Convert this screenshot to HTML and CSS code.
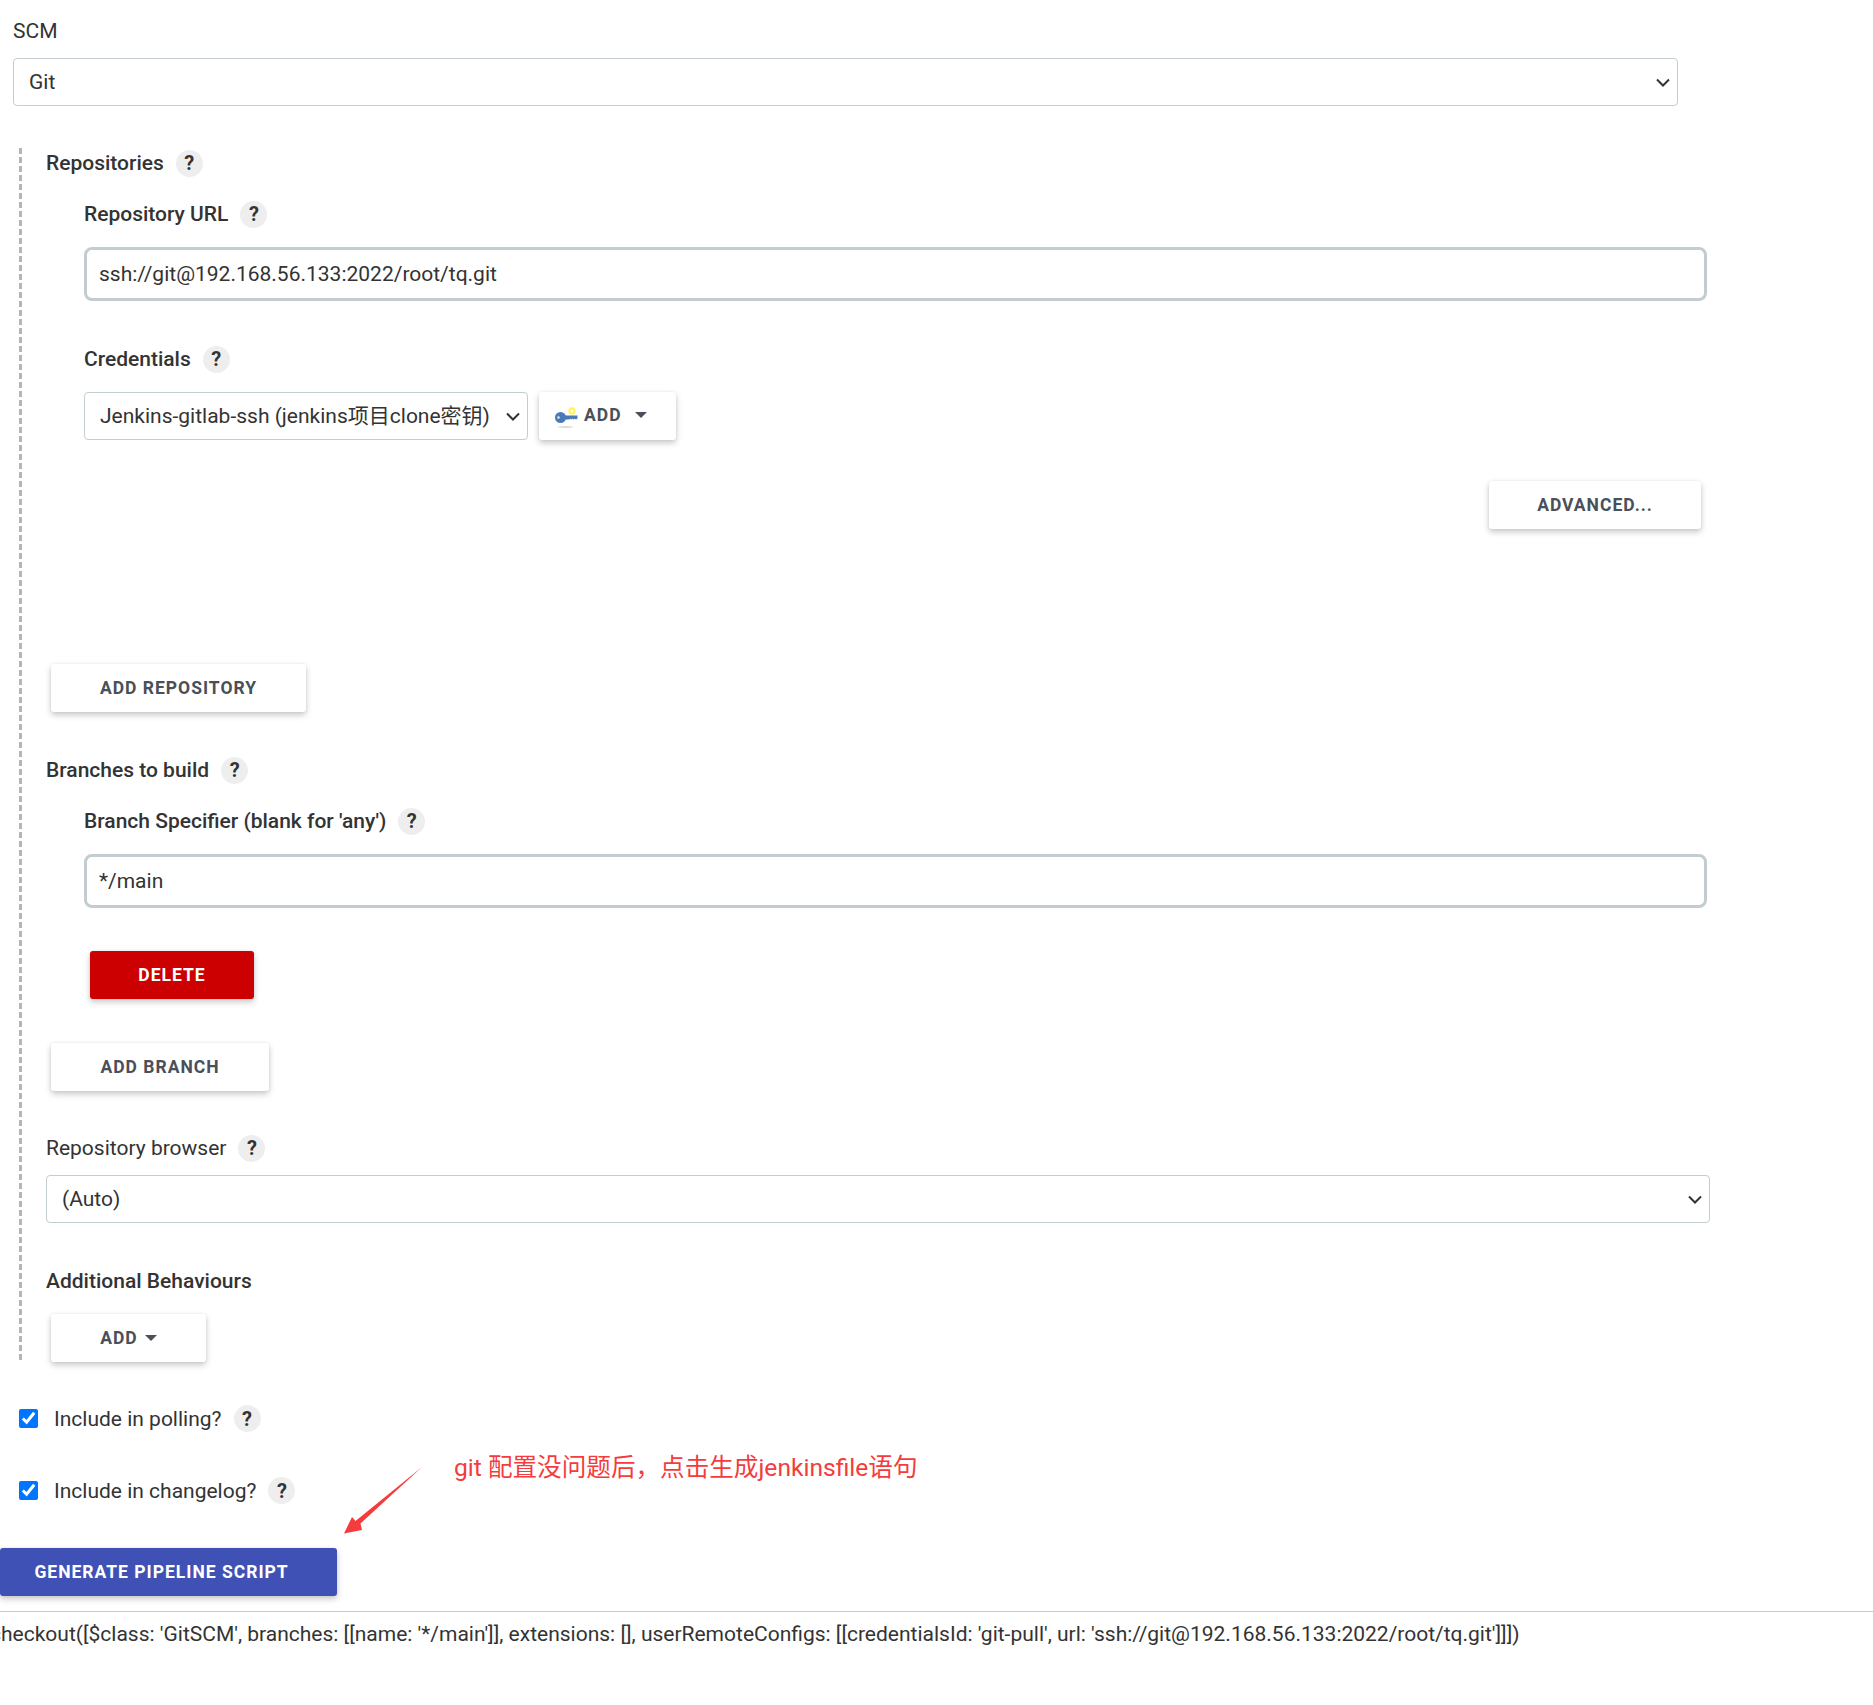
FILE: index.html
```html
<!DOCTYPE html>
<html lang="en">
<head>
<meta charset="utf-8">
<title>Pipeline Syntax</title>
<link rel="stylesheet" href="styles.css">
</head>
<body>
<main class="page">
  <section class="scm">
    <label class="label plain">SCM</label>
    <select class="select scm-select"><option>Git</option></select>
  </section>

  <section class="git-config">
    <div class="title first"><span>Repositories</span><i class="help">?</i></div>
    <div class="nested">
      <div class="title"><span>Repository URL</span><i class="help">?</i></div>
      <input class="input" type="text" value="ssh://git@192.168.56.133:2022/root/tq.git">
      <div class="title cred-title"><span>Credentials</span><i class="help">?</i></div>
      <div class="cred-row">
        <select class="select cred-select"><option>Jenkins-gitlab-ssh (jenkins项目clone密钥)</option></select>
        <button class="btn add-cred" type="button">
          <svg class="key" width="24" height="24" viewBox="0 0 24 24" aria-hidden="true">
            <ellipse cx="11.5" cy="23" rx="7.5" ry="1" fill="#ddd"/>
            <circle cx="18" cy="7" r="3.7" fill="#fff45c"/>
            <circle cx="18" cy="7" r="1.6" fill="#fffde0"/>
            <circle cx="6.5" cy="13.5" r="5.5" fill="#4a7ab8"/>
            <path d="M10 11.5h13.5v3l-1.5 1-1.2-.8-1.2.8-1.2-.8-1.2.8-1.2-.8-1 .8H10z" fill="#4a7ab8"/>
            <circle cx="4.5" cy="13.5" r="1.3" fill="#dfe8f3"/>
          </svg>
          <span>ADD</span><b class="caret wide"></b>
        </button>
      </div>
      <div class="advanced-row"><button class="btn advanced" type="button">ADVANCED...</button></div>
    </div>
    <button class="btn add-repo" type="button">ADD REPOSITORY</button>

    <div class="title branches"><span>Branches to build</span><i class="help">?</i></div>
    <div class="nested">
      <div class="title"><span>Branch Specifier (blank for 'any')</span><i class="help">?</i></div>
      <input class="input" type="text" value="*/main">
      <button class="btn danger" type="button">DELETE</button>
    </div>
    <button class="btn add-branch" type="button">ADD BRANCH</button>

    <div class="label browser-label"><span>Repository browser</span><i class="help">?</i></div>
    <select class="select browser-select"><option>(Auto)</option></select>

    <div class="title behaviours"><span>Additional Behaviours</span></div>
    <button class="btn add-behaviour" type="button"><span>ADD</span><b class="caret"></b></button>
  </section>

  <label class="check polling"><input type="checkbox" checked><span>Include in polling?</span><i class="help">?</i></label>
  <label class="check changelog"><input type="checkbox" checked><span>Include in changelog?</span><i class="help">?</i></label>

  <button class="btn primary" type="button">GENERATE PIPELINE SCRIPT</button>
  <hr class="rule">
  <div class="output"><p>checkout([$class: 'GitSCM', branches: [[name: '*/main']], extensions: [], userRemoteConfigs: [[credentialsId: 'git-pull', url: 'ssh://git@192.168.56.133:2022/root/tq.git']]])</p></div>

  <svg class="arrow" width="90" height="80" viewBox="0 0 90 80" aria-hidden="true">
    <path d="M87 7 25.500 63.500 27 70 9 73.500 17 57 20.500 61z" fill="#f43c3c"/>
  </svg>
  <p class="note">git 配置没问题后，点击生成jenkinsfile语句</p>
</main>
</body>
</html>
```

FILE: styles.css
```css
* { box-sizing: border-box; }
html, body { margin: 0; background: #fff; }
body {
  font-family: Roboto, "Noto Sans CJK SC", sans-serif;
  font-size: 21px;
  color: #333;
}
.page { position: relative; width: 1873px; height: 1705px; overflow: hidden; padding-top: 19px; }

.label, .title {
  display: flex;
  align-items: center;
  height: 24px;
  line-height: 24px;
  font-size: 21px;
  color: #333;
}
.title { font-weight: 500; }
.plain { margin-left: 13px; }

.help {
  display: inline-flex;
  align-items: center;
  justify-content: center;
  width: 27px;
  height: 27px;
  margin-left: 12px;
  border-radius: 50%;
  background: #eee;
  font-style: normal;
  font-weight: 700;
  font-size: 20px;
  color: #333;
  flex: none;
}

.select {
  display: block;
  height: 48px;
  padding: 0 28px 0 15px;
  border: 1px solid #c3ccd1;
  border-radius: 4px;
  background: #fff url("data:image/svg+xml,%3Csvg xmlns='http://www.w3.org/2000/svg' width='14' height='9' viewBox='0 0 14 9'%3E%3Cpath d='M1 1.500l6 6 6-6' fill='none' stroke='%23333' stroke-width='2'/%3E%3C/svg%3E") no-repeat right 7px center;
  appearance: none;
  font: 400 21px Roboto, "Noto Sans CJK SC", sans-serif;
  color: #333;
}
.scm-select { width: 1665px; margin: 15px 0 0 13px; }

.git-config {
  margin: 42px 0 0 19px;
  padding: 0 0 0 27px;
  background: repeating-linear-gradient(#b0b6ba 0 6px, transparent 6px 9px) no-repeat 0 0 / 3px 100%;
  height: 1214px;
}
.first { padding-top: 3px; height: 27px; }
.nested { margin-left: 38px; }
.nested > .title { margin-top: 27px; }
.nested > .cred-title { margin-top: 46px; }

.input {
  display: block;
  width: 1623px;
  height: 54px;
  margin-top: 21px;
  padding: 0 12px;
  border: 3px solid #c3ccd1;
  border-radius: 8px;
  font: 400 21px Roboto, sans-serif;
  color: #333;
  background: #fff;
  outline: none;
}

.cred-row { display: flex; gap: 11px; margin-top: 21px; }
.cred-select { width: 444px; }

.btn {
  display: inline-flex;
  align-items: center;
  justify-content: center;
  height: 48px;
  padding: 0;
  border: 0;
  border-radius: 3px;
  background: #fff;
  box-shadow: 0 3px 6px rgba(0, 0, 0, .22), 0 0 3px rgba(0, 0, 0, .06);
  font: 700 17.500px Roboto, sans-serif;
  letter-spacing: 1px;
  color: #4a4f59;
}
.add-cred { width: 137px; justify-content: flex-start; padding: 0 0 3px 15px; }
.key { width: 24px; height: 24px; margin: 3px 6px 0 0; flex: none; }
.caret {
  display: inline-block;
  width: 0;
  height: 0;
  margin-left: 7px;
  border-style: solid;
  border-width: 6px 6px 0;
  border-color: #4a4f59 transparent transparent;
}
.caret.wide { margin-left: 13px; }

.advanced-row { display: flex; justify-content: flex-end; width: 1617px; margin-top: 41px; }
.advanced { width: 212px; }
.add-repo { display: flex; width: 255px; margin: 135px 0 0 5px; }
.branches { margin-top: 46px; }
.danger {
  display: flex;
  width: 164px;
  margin: 43px 0 0 6px;
  background: #cc0000;
  color: #fff;
}
.add-branch { display: flex; width: 218px; margin: 44px 0 0 5px; }
.browser-label { margin-top: 45px; }
.browser-select { width: 1664px; margin-top: 15px; }
.behaviours { margin-top: 46px; }
.add-behaviour { display: flex; width: 155px; margin: 21px 0 0 5px; }

.check { display: flex; align-items: center; height: 27px; margin-left: 19px; font-size: 21px; }
.check input { width: 19px; height: 19px; margin: 0 16px 0 0; accent-color: #0075ff; flex: none; }
.polling { margin-top: 43px; }
.changelog { margin-top: 45px; }

.primary {
  display: flex;
  width: 337px;
  margin-top: 44px;
  padding-right: 14px;
  background: #3f51b5;
  color: #fff;
}
.rule { height: 1px; margin: 15px 0 0; border: 0; background: #c3ccd1; }
.output { margin-top: 10px; font-size: 21px; line-height: 24px; white-space: nowrap; }
.output p { margin: 0 0 0 -10px; }

.arrow { position: absolute; left: 335px; top: 1460px; }
.note {
  position: absolute;
  left: 454px;
  top: 1451px;
  margin: 0;
  font-size: 24.600px;
  line-height: 34px;
  color: #f43c3c;
  white-space: nowrap;
}
```
